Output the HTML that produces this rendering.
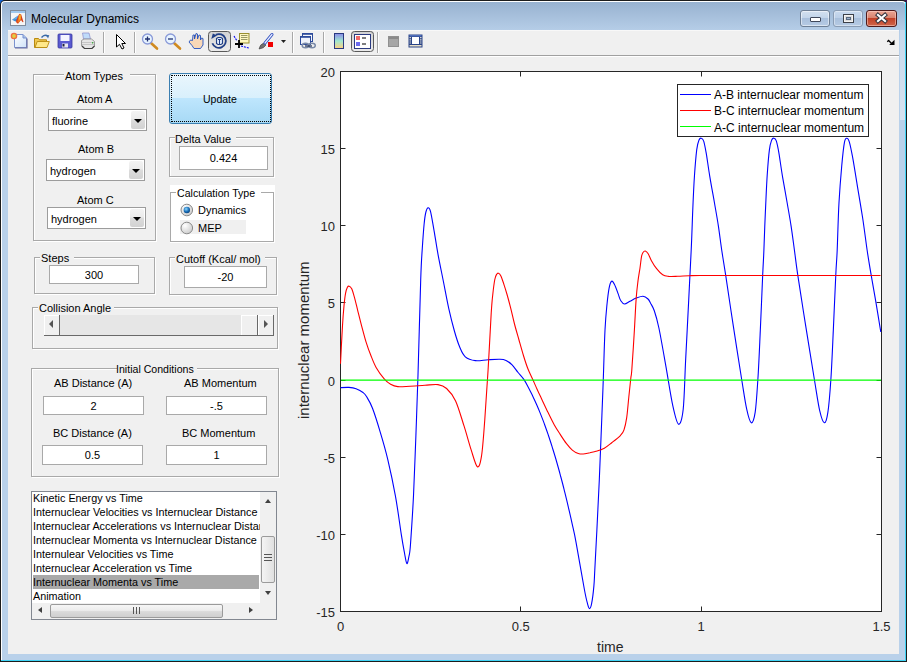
<!DOCTYPE html>
<html><head><meta charset="utf-8"><style>
html,body{margin:0;padding:0;}
body{width:907px;height:662px;overflow:hidden;position:relative;background:#1c1c1c;font-family:"Liberation Sans",sans-serif;color:#000;}
div{box-sizing:border-box;}
.a{position:absolute;}
.t{position:absolute;white-space:nowrap;font-size:11px;line-height:13px;}
.pan{position:absolute;border:1px solid #a7a7a7;box-shadow:inset 1px 1px 0 #fff,1px 1px 0 #fff;}
.ptl{position:absolute;background:#f0f0f0;white-space:nowrap;font-size:11px;line-height:13px;padding:0 3px 0 2px;}
.edit{position:absolute;background:#fff;border:1px solid #a9a9a9;font-size:11px;text-align:center;white-space:nowrap;}
.pop{position:absolute;background:#fff;border:1px solid #9c9c9c;font-size:11px;white-space:nowrap;}
.pop .btn{position:absolute;right:1px;top:1px;bottom:1px;width:14px;border-radius:2px;background:linear-gradient(#f3f3f3 0%,#ebebeb 45%,#dcdcdc 50%,#d2d2d2 100%);}
.pop .btn:after{content:"";position:absolute;left:3px;top:8px;border-left:4px solid transparent;border-right:4px solid transparent;border-top:4.5px solid #000;}
.sep{position:absolute;top:32px;width:1px;height:21px;background:#a0a0a0;box-shadow:1px 0 0 #fff;}
</style></head><body>
<!-- frame -->
<div class="a" style="left:0;top:0;width:6px;height:6px;background:#1464d2;"></div>
<div class="a" style="left:901px;top:0;width:6px;height:6px;background:#3c1650;"></div>
<div class="a" style="left:0;top:0;width:907px;height:662px;background:#1c1c1c;border-radius:5px 5px 0 0;"></div>
<div class="a" style="left:1px;top:1px;width:905px;height:660px;background:#fff;border-radius:4px 4px 0 0;"></div>
<div class="a" style="left:905px;top:2px;width:1px;height:659px;background:#3fd3f5;"></div>
<div class="a" style="left:1px;top:660px;width:905px;height:1px;background:#3fd3f5;"></div>
<div class="a" style="left:2px;top:2px;width:903px;height:658px;border-radius:3px 3px 0 0;background:linear-gradient(#98b2d0 0px,#b5cde7 28px,#b9d1ea 40px,#b9d1ea 100%);"></div>
<div class="a" style="left:900px;top:30px;width:5px;height:90px;background:linear-gradient(#c8d9ec,#d6e2ef);"></div>
<!-- title -->
<svg class="a" style="left:10px;top:10px" width="16" height="16" viewBox="0 0 16 16">
 <rect x="0.5" y="0.5" width="15" height="15" fill="#f6f6f6" stroke="#7f8c9c"/>
 <rect x="1" y="1" width="14" height="2" fill="#9fc8ee"/>
 <path d="M2,9.8 L8.5,5.2 L8,11 L5.5,11.5Z" fill="#3f8ad0"/>
 <path d="M2.5,9.8 L8.5,5.5 L6.5,9Z" fill="#6ab0e8"/>
 <path d="M6,11 L9.3,3.8 L11.2,4.5 L13.5,12 L12.7,12.3 L11,10 L8,13.8 L6.5,12.8Z" fill="#d8401a"/>
 <path d="M8.5,6 L10.5,4.2 L11,9.8 L8.3,13 L7.5,11.5Z" fill="#f0781e"/>
 <path d="M9.5,4.8 L10.6,4.5 L10.5,9 L9.2,9.8Z" fill="#f8c828"/>
</svg>
<div class="t" style="left:31px;top:12px;font-size:12px;line-height:14px;color:#000;">Molecular Dynamics</div>
<!-- window buttons -->
<div class="a" style="left:800px;top:10px;width:30px;height:17px;border:1px solid #6d7f95;border-radius:3px;background:linear-gradient(#d3e0ef 0%,#c3d5ea 45%,#a9c0dc 50%,#b6cbe4 100%);box-shadow:inset 0 0 0 1px rgba(255,255,255,.5);"></div>
<div class="a" style="left:810px;top:17px;width:11px;height:5px;background:#fff;border:1px solid #40485a;border-radius:1px;"></div>
<div class="a" style="left:833px;top:10px;width:30px;height:17px;border:1px solid #8a9cb3;border-radius:3px;background:linear-gradient(#c9daee 0%,#bcd0e8 45%,#a9c0dc 50%,#b6cbe4 100%);box-shadow:inset 0 0 0 1px rgba(255,255,255,.4);"></div>
<div class="a" style="left:843px;top:14px;width:11px;height:9px;border:1px solid #3c4048;background:#dcdcdc;box-shadow:inset 0 0 0 1px #f4f4f4;"></div>
<div class="a" style="left:846px;top:17px;width:5px;height:3px;background:#9ab0cc;border:1px solid #5a6a80;"></div>
<div class="a" style="left:866px;top:10px;width:31px;height:17px;border:1px solid #4f1a1a;border-radius:3px;background:linear-gradient(#eba593 0%,#d98470 45%,#c24127 50%,#d0664b 100%);box-shadow:inset 0 0 0 1px rgba(255,220,210,.5);"></div>
<svg class="a" style="left:872px;top:11px" width="19" height="15" viewBox="0 0 19 15"><path d="M6,4 L13,10 M13,4 L6,10" stroke="#34343e" stroke-width="4.2" fill="none" stroke-linecap="square"/><path d="M6,4 L13,10 M13,4 L6,10" stroke="#fff" stroke-width="2.2" fill="none" stroke-linecap="square"/></svg>
<!-- content -->
<div class="a" style="left:8px;top:30px;width:891px;height:624px;background:#f0f0f0;"></div>
<div class="a" style="left:8px;top:30px;width:891px;height:1px;background:#f8f8f8;"></div>
<div class="a" style="left:8px;top:55px;width:891px;height:1px;background:#a0a0a0;"></div>
<div class="a" style="left:8px;top:56px;width:891px;height:1px;background:#fff;"></div>
<svg class="a" style="left:0;top:0" width="907" height="60" viewBox="0 0 907 60">
 <defs>
  <linearGradient id="gdoc" x1="0" y1="0" x2="1" y2="1"><stop offset="0" stop-color="#ffffff"/><stop offset="1" stop-color="#cfe2f8"/></linearGradient>
  <linearGradient id="gfold" x1="0" y1="0" x2="0" y2="1"><stop offset="0" stop-color="#fff6b0"/><stop offset="1" stop-color="#f2c640"/></linearGradient>
  <linearGradient id="gcb" x1="0" y1="0" x2="0" y2="1"><stop offset="0" stop-color="#8a8ae8"/><stop offset="0.5" stop-color="#a0e8d0"/><stop offset="1" stop-color="#ffd080"/></linearGradient>
  <linearGradient id="gpress" x1="0" y1="0" x2="0" y2="1"><stop offset="0" stop-color="#d2d2d2"/><stop offset="1" stop-color="#ececec"/></linearGradient>
 </defs>
 <!-- new -->
 <path d="M14.5,34.5 H23 L26.5,38 V47.5 H14.5 Z" fill="url(#gdoc)" stroke="#7b93cf" stroke-width="1"/>
 <path d="M15,48 H27 V38.5" fill="none" stroke="#6a6ea0" stroke-width="1.2"/>
 <path d="M23,34.5 V38 H26.5" fill="#a8c0e8" stroke="#7b93cf"/>
 <circle cx="14" cy="36" r="2.6" fill="#e0d040" stroke="#f07040" stroke-width="1.4"/>
 <!-- open -->
 <path d="M34.5,38.5 H38.5 L39.5,39.8 H46.5 V47.5 H34.5Z" fill="#f0c850" stroke="#b88a10"/>
 <path d="M35,47.5 L37.2,41.5 H49.3 L47,47.5Z" fill="#ffe88a" stroke="#b88a10" stroke-width="0.9"/>
 <path d="M41.5,37.5 Q44.5,33.8 47.5,36.2" fill="none" stroke="#3a6aa8" stroke-width="1.3"/>
 <path d="M46,34.8 L49.3,35.3 L48,38.5Z" fill="#3a6aa8"/>
 <!-- save -->
 <rect x="58" y="34" width="14" height="14" rx="1" fill="#5a5ad0" stroke="#3838a0" stroke-width="0.8"/>
 <rect x="60.5" y="35" width="9" height="6" fill="#f4f4ff"/>
 <rect x="62" y="43.5" width="6" height="4" fill="#e8e8f0"/>
 <rect x="62.5" y="44" width="2" height="2.5" fill="#202040"/>
 <!-- print -->
 <path d="M82.5,33 H89 L90.5,39 H83.5Z" fill="#c0dcfa" stroke="#8a8ac8" stroke-width="0.7"/>
 <path d="M81.5,40.5 L84,39 H91.5 L94.5,41.5 V46 L92,48.5 H84.5 L81.5,46Z" fill="#e6e6e6" stroke="#8a8a8a" stroke-width="0.8"/>
 <path d="M82,42.5 H94 M82,44.5 H94" stroke="#b8b8b8" stroke-width="0.7"/>
 <path d="M82,46 L84.5,48.5 H92 L94.5,46" fill="none" stroke="#404040" stroke-width="1.2"/>
 <rect x="92" y="42" width="1.2" height="1.5" fill="#40b040"/>
 <!-- separators -->
 <rect x="103" y="32" width="1" height="21" fill="#a8a8a8"/><rect x="104" y="32" width="1" height="21" fill="#fff"/>
 <!-- arrow -->
 <path d="M116.5,34.5 V47 L119.5,44.3 L122,49 L124,48 L121.8,43.5 H125.5 Z" fill="#fff" stroke="#000" stroke-width="1"/>
 <rect x="134" y="32" width="1" height="21" fill="#a8a8a8"/><rect x="135" y="32" width="1" height="21" fill="#fff"/>
 <!-- zoom in -->
 <path d="M151,43 L157,48.5" stroke="#d08a20" stroke-width="2.6" stroke-linecap="round"/>
 <circle cx="147.5" cy="39" r="5" fill="#e8f4ff" stroke="#8a9ad8" stroke-width="1.3"/>
 <path d="M145,39 H150 M147.5,36.5 V41.5" stroke="#203070" stroke-width="1.3"/>
 <!-- zoom out -->
 <path d="M174,43 L180,48.5" stroke="#d08a20" stroke-width="2.6" stroke-linecap="round"/>
 <circle cx="170.5" cy="39" r="5" fill="#e8f4ff" stroke="#8a9ad8" stroke-width="1.3"/>
 <path d="M168,39 H173" stroke="#203070" stroke-width="1.3"/>
 <!-- hand -->
 <path d="M189,42 L192,45.5 L194,48.5 H200.5 L203,45 V38.5 L201.5,38 L200.5,40 V35.5 L199,35 L197.5,39 V34 L196,33.5 L194.5,39 V35 L193,35 L192.5,40.5 L190.5,40 Z" fill="#f8d8b8" stroke="#2050c0" stroke-width="0.9"/>
 <!-- rotate pressed -->
 <rect x="208.5" y="31.5" width="22" height="20" rx="3" fill="url(#gpress)" stroke="#5a5a5a"/>
 <path d="M212.4,43.3 A6.9,6.9 0 1 0 215.8,34.8" fill="none" stroke="#213f86" stroke-width="1.8"/>
 <path d="M211.3,39 L212.8,33.5 L217,35.5Z" fill="#213f86"/>
 <path d="M216.5,38.5 L218,37.5 H221 L222.5,38.5 V43.5 L221,44.5 H218 L216.5,43.5Z" fill="#dce8fa" stroke="#213f86" stroke-width="1.1"/>
 <path d="M218,39.5 H221 M219.5,39.5 V44" stroke="#213f86" stroke-width="1"/>
 <!-- data cursor -->
 <rect x="239.5" y="33.5" width="9.5" height="9.5" fill="#fff8c0" stroke="#9a9030"/>
 <path d="M241,35.5 H247.5 M241,37.5 H247.5 M241,39.5 H247.5" stroke="#8c8c5a" stroke-width="0.9"/>
 <path d="M234,36 L237,41 M241,46 L249,48" stroke="#0000f0" stroke-width="1.1" stroke-dasharray="2 1"/>
 <path d="M235,44 H243 M239,40 V48" stroke="#000" stroke-width="1.8"/>
 <!-- brush -->
 <path d="M259,49 Q260,44 264,43 L266,45 Q264,48.5 259,49Z" fill="#707070" stroke="#404040" stroke-width="0.6"/>
 <path d="M265,43 L272,34.5" stroke="#3050c0" stroke-width="3" stroke-linecap="round"/>
 <path d="M265,43 L272,34.5" stroke="#e8ecff" stroke-width="1.2" stroke-linecap="round"/>
 <rect x="268" y="42" width="5" height="5" fill="#f00000"/>
 <path d="M281,40 H286 L283.5,43Z" fill="#202020"/>
 <rect x="292" y="32" width="1" height="21" fill="#a8a8a8"/><rect x="293" y="32" width="1" height="21" fill="#fff"/>
 <!-- link -->
 <rect x="302.5" y="33.5" width="10" height="8" fill="#f4f6fc" stroke="#2c4a9a"/>
 <rect x="302.5" y="33" width="10" height="1.8" fill="#2c4a9a"/>
 <rect x="300.5" y="36.5" width="10" height="8" fill="#eef2fb" stroke="#2c4a9a"/>
 <rect x="300.5" y="36" width="10" height="1.8" fill="#2c4a9a"/>
 <ellipse cx="305.5" cy="45.5" rx="3.3" ry="2.3" fill="none" stroke="#7a8aa8" stroke-width="1.5"/>
 <ellipse cx="312" cy="45.5" rx="3.3" ry="2.3" fill="none" stroke="#7a8aa8" stroke-width="1.5"/>
 <path d="M305,46 H312" stroke="#1a2a50" stroke-width="1.2"/>
 <rect x="323" y="32" width="1" height="21" fill="#a8a8a8"/><rect x="324" y="32" width="1" height="21" fill="#fff"/>
 <!-- colorbar -->
 <rect x="334.5" y="33.5" width="9" height="15" fill="url(#gcb)" stroke="#2a3a80"/>
 <!-- legend pressed -->
 <rect x="351.5" y="31.5" width="22" height="20" rx="3" fill="url(#gpress)" stroke="#5a5a5a"/>
 <rect x="354.5" y="34.5" width="16" height="14" fill="#fff" stroke="#2a3a80"/>
 <rect x="356" y="36" width="4" height="4" fill="#f06a6a"/><rect x="356" y="42" width="4" height="4" fill="#6a6af0"/>
 <path d="M362,38 H366 M362,44 H366" stroke="#000" stroke-width="1.2"/>
 <rect x="377" y="32" width="1" height="21" fill="#a8a8a8"/><rect x="378" y="32" width="1" height="21" fill="#fff"/>
 <!-- grey square -->
 <rect x="388.5" y="36.5" width="10" height="10" fill="#a6a6a6" stroke="#909090"/>
 <rect x="389" y="37" width="9.5" height="2" fill="#8a8a8a"/>
 <!-- film -->
 <rect x="408.5" y="34.5" width="14" height="13" fill="#2a4488"/>
 <rect x="409.5" y="35.2" width="12" height="1.2" fill="#5a7ac8"/>
 <rect x="412" y="37" width="7" height="7" fill="#fff"/>
 <path d="M410.2,37 V44 M420.8,37 V44" stroke="#f4f0e0" stroke-width="1.3" stroke-dasharray="1 0.8"/>
 <rect x="409.5" y="45" width="12" height="1.5" fill="#e8e0c8"/>
 <!-- right arrow -->
 <path d="M887.3,41.8 L888.6,40.5 L891.8,43.7" stroke="#000" stroke-width="1.3" fill="none"/>
 <path d="M894.5,39.8 V45 H889.2Z" fill="#000"/>
</svg>

<div class="a" style="left:34px;top:75px;width:123px;height:167px;border:1px solid #fff"></div><div class="a" style="left:33px;top:74px;width:123px;height:167px;border:1px solid #a9a9a9"></div><div class="a" style="left:64px;top:73px;width:66px;height:4px;background:#f0f0f0"></div><div class="t" style="left:65px;top:70px;font-size:11px">Atom Types</div><div class="t" style="left:77px;top:93px;font-size:11px;">Atom A</div><div class="pop" style="left:48px;top:109px;width:99px;height:22px;line-height:23px;padding-left:3px">fluorine<div class="btn"></div></div><div class="t" style="left:78px;top:143px;font-size:11px;">Atom B</div><div class="pop" style="left:46px;top:159px;width:99px;height:22px;line-height:23px;padding-left:3px">hydrogen<div class="btn"></div></div><div class="t" style="left:77px;top:194px;font-size:11px;">Atom C</div><div class="pop" style="left:47px;top:207px;width:99px;height:22px;line-height:23px;padding-left:3px">hydrogen<div class="btn"></div></div><div class="a" style="left:169px;top:73px;width:103px;height:51px;border:1px solid #3c7fb1;border-radius:3px;background:linear-gradient(#eaf6fd 0%,#d9f0fc 48%,#bee6fd 50%,#a7d9f5 100%);"></div><div class="a" style="left:171px;top:75px;width:100px;height:47px;border:1px dotted #000;"></div><div class="t" style="left:203px;top:93px;font-size:11px;font-size:10.5px">Update</div><div class="a" style="left:170px;top:138px;width:105px;height:40px;border:1px solid #fff"></div><div class="a" style="left:169px;top:137px;width:105px;height:40px;border:1px solid #a9a9a9"></div><div class="a" style="left:175px;top:136px;width:61px;height:4px;background:#f0f0f0"></div><div class="t" style="left:175px;top:133px;font-size:11px">Delta Value</div><div class="edit" style="left:179px;top:146px;width:89px;height:24px;line-height:23px">0.424</div><div class="a" style="left:170px;top:185px;width:105px;height:58px;background:#fff"></div><div class="a" style="left:171px;top:193px;width:104px;height:50px;border:1px solid #fff"></div><div class="a" style="left:170px;top:192px;width:104px;height:50px;border:1px solid #a9a9a9"></div><div class="a" style="left:176px;top:191px;width:85px;height:4px;background:#fff"></div><div class="t" style="left:177px;top:187px;font-size:10.6px">Calculation Type</div><div class="a" style="left:180px;top:220px;width:66px;height:14px;background:#f0f0f0"></div><svg class="a" style="left:180px;top:203px" width="14" height="32" viewBox="0 0 14 32"><defs><radialGradient id="rg" cx="0.35" cy="0.3" r="0.8"><stop offset="0" stop-color="#fff"/><stop offset="1" stop-color="#c8c8c8"/></radialGradient><radialGradient id="rb" cx="0.4" cy="0.35" r="0.7"><stop offset="0" stop-color="#8fd8ff"/><stop offset="0.6" stop-color="#1a6fb8"/><stop offset="1" stop-color="#0a3f78"/></radialGradient></defs><circle cx="6.8" cy="7" r="5.8" fill="url(#rg)" stroke="#8a8a8a"/><circle cx="6.8" cy="7" r="3.2" fill="url(#rb)"/><circle cx="6.8" cy="25" r="5.8" fill="url(#rg)" stroke="#8a8a8a"/></svg><div class="t" style="left:198px;top:204px;font-size:11px;">Dynamics</div><div class="t" style="left:198px;top:222px;font-size:11px;">MEP</div><div class="a" style="left:35px;top:258px;width:121px;height:37px;border:1px solid #fff"></div><div class="a" style="left:34px;top:257px;width:121px;height:37px;border:1px solid #a9a9a9"></div><div class="a" style="left:40px;top:256px;width:34px;height:4px;background:#f0f0f0"></div><div class="t" style="left:41px;top:252px;font-size:11px">Steps</div><div class="edit" style="left:49px;top:265px;width:90px;height:19px;line-height:18px">300</div><div class="a" style="left:170px;top:258px;width:108px;height:38px;border:1px solid #fff"></div><div class="a" style="left:169px;top:257px;width:108px;height:38px;border:1px solid #a9a9a9"></div><div class="a" style="left:175px;top:256px;width:90px;height:4px;background:#f0f0f0"></div><div class="t" style="left:176px;top:253px;font-size:11px">Cutoff (Kcal/ mol)</div><div class="edit" style="left:184px;top:266px;width:83px;height:22px;line-height:21px">-20</div><div class="a" style="left:33px;top:308px;width:246px;height:42px;border:1px solid #fff"></div><div class="a" style="left:32px;top:307px;width:246px;height:42px;border:1px solid #a9a9a9"></div><div class="a" style="left:38px;top:306px;width:76px;height:4px;background:#f0f0f0"></div><div class="t" style="left:39px;top:302px;font-size:11px">Collision Angle</div><div class="a" style="left:44px;top:315px;width:230px;height:21px;background:#e6e6e6;border-bottom:1px solid #696969"></div><div class="a" style="left:44px;top:315px;width:16px;height:21px;background:#f0f0f0;border-right:1px solid #696969;border-bottom:1px solid #696969;box-shadow:inset 1px 1px 0 #fff"></div><div class="a" style="left:49px;top:320px;border-top:4px solid transparent;border-bottom:4px solid transparent;border-right:4px solid #555"></div><div class="a" style="left:241px;top:315px;width:17px;height:21px;background:#f0f0f0;border-right:1px solid #696969;border-bottom:1px solid #696969;box-shadow:inset 1px 1px 0 #fff"></div><div class="a" style="left:258px;top:315px;width:16px;height:21px;background:#f0f0f0;border-right:1px solid #696969;border-bottom:1px solid #696969;box-shadow:inset 1px 1px 0 #fff"></div><div class="a" style="left:264px;top:320px;border-top:4px solid transparent;border-bottom:4px solid transparent;border-left:4px solid #555"></div><div class="a" style="left:32px;top:369px;width:248px;height:109px;border:1px solid #fff"></div><div class="a" style="left:31px;top:368px;width:248px;height:109px;border:1px solid #a9a9a9"></div><div class="a" style="left:117px;top:367px;width:80px;height:4px;background:#f0f0f0"></div><div class="t" style="left:116px;top:363px;font-size:10.6px">Initial Conditions</div><div class="t" style="left:54px;top:377px;font-size:11px;">AB Distance (A)</div><div class="edit" style="left:43px;top:396px;width:101px;height:19px;line-height:18px">2</div><div class="t" style="left:184px;top:377px;font-size:11px;">AB Momentum</div><div class="edit" style="left:166px;top:396px;width:101px;height:19px;line-height:18px">-.5</div><div class="t" style="left:53px;top:427px;font-size:11px;">BC Distance (A)</div><div class="edit" style="left:42px;top:445px;width:101px;height:20px;line-height:19px">0.5</div><div class="t" style="left:182px;top:427px;font-size:11px;">BC Momentum</div><div class="edit" style="left:166px;top:445px;width:101px;height:20px;line-height:19px">1</div><div class="a" style="left:31px;top:491px;width:246px;height:129px;border:1px solid #828790;background:#fff;overflow:hidden"><div class="a" style="left:1px;top:83px;width:226px;height:14px;background:#a9a9a9"></div><div class="a" style="left:0;top:0;width:228px;height:111px;overflow:hidden"><div class="t" style="left:1px;top:-1px;font-size:10.8px;line-height:14px">Kinetic Energy vs Time</div><div class="t" style="left:1px;top:13px;font-size:10.8px;line-height:14px">Internuclear Velocities vs Internuclear Distance</div><div class="t" style="left:1px;top:27px;font-size:10.8px;line-height:14px">Internuclear Accelerations vs Internuclear Distance</div><div class="t" style="left:1px;top:41px;font-size:10.8px;line-height:14px">Internuclear Momenta vs Internuclear Distance</div><div class="t" style="left:1px;top:55px;font-size:10.8px;line-height:14px">Internulear Velocities vs Time</div><div class="t" style="left:1px;top:69px;font-size:10.8px;line-height:14px">Internuclear Acceleration vs Time</div><div class="t" style="left:1px;top:83px;font-size:10.8px;line-height:14px">Internuclear Momenta vs Time</div><div class="t" style="left:1px;top:97px;font-size:10.8px;line-height:14px">Animation</div></div><div class="a" style="left:228px;top:0;width:16px;height:111px;background:#f0f0f0"></div><div class="a" style="left:233px;top:7px;border-left:3.5px solid transparent;border-right:3.5px solid transparent;border-bottom:4px solid #404040"></div><div class="a" style="left:233px;top:99px;border-left:3.5px solid transparent;border-right:3.5px solid transparent;border-top:4px solid #404040"></div><div class="a" style="left:229px;top:44px;width:14px;height:47px;border:1px solid #9a9a9a;border-radius:2px;background:linear-gradient(90deg,#f4f4f4,#e0e0e0)"></div><div class="a" style="left:232px;top:62px;width:8px;height:7px;border-top:1px solid #555;border-bottom:1px solid #555"></div><div class="a" style="left:232px;top:65px;width:8px;height:1px;background:#555"></div><div class="a" style="left:0;top:111px;width:244px;height:16px;background:#f0f0f0"></div><div class="a" style="left:6px;top:115px;border-top:3.5px solid transparent;border-bottom:3.5px solid transparent;border-right:4px solid #404040"></div><div class="a" style="left:217px;top:115px;border-top:3.5px solid transparent;border-bottom:3.5px solid transparent;border-left:4px solid #404040"></div><div class="a" style="left:18px;top:112px;width:173px;height:14px;border:1px solid #9a9a9a;border-radius:2px;background:linear-gradient(#f6f6f6 0%,#ececec 45%,#dadada 55%,#cfcfcf 100%)"></div><div class="a" style="left:101px;top:115px;width:7px;height:7px;border-left:1px solid #555;border-right:1px solid #555"></div><div class="a" style="left:104px;top:115px;width:1px;height:7px;background:#555"></div></div>
<svg class="a" style="left:0;top:0" width="907" height="662" viewBox="0 0 907 662"><rect x="340.5" y="71.5" width="541.0" height="540.0" fill="#fff"/><path d="M340.5,611.5 h5 M881.5,611.5 h-5 M340.5,534.5 h5 M881.5,534.5 h-5 M340.5,457.5 h5 M881.5,457.5 h-5 M340.5,380.5 h5 M881.5,380.5 h-5 M340.5,302.5 h5 M881.5,302.5 h-5 M340.5,225.5 h5 M881.5,225.5 h-5 M340.5,148.5 h5 M881.5,148.5 h-5 M340.5,71.5 h5 M881.5,71.5 h-5 M340.5,71.5 v5 M340.5,611.5 v-5 M520.5,71.5 v5 M520.5,611.5 v-5 M701.5,71.5 v5 M701.5,611.5 v-5 M881.5,71.5 v5 M881.5,611.5 v-5 " stroke="#262626" stroke-width="1" fill="none"/><rect x="340.5" y="71.5" width="541.0" height="540.0" fill="none" stroke="#262626" stroke-width="1"/><defs><clipPath id="pc"><rect x="340" y="71" width="542" height="541"/></clipPath></defs><g clip-path="url(#pc)" fill="none" stroke-width="1.1" stroke-linejoin="round"><path d="M340.5,387.7 C341.9,387.6 346.3,387.2 348.9,387.4 C351.5,387.6 353.8,387.9 356.1,388.8 C358.5,389.7 361.3,391.2 363.0,392.5 C364.7,393.8 364.9,393.9 366.5,396.5 C368.1,399.1 370.2,402.2 372.5,408.2 C374.8,414.2 377.8,423.8 380.3,432.4 C382.9,441.0 385.3,449.0 387.8,459.6 C390.3,470.2 393.1,483.2 395.4,495.8 C397.7,508.4 399.9,525.6 401.4,535.1 C402.9,544.6 403.6,548.2 404.5,553.0 C405.4,557.8 406.1,563.1 406.9,563.6 C407.6,564.1 408.4,559.2 409.0,556.0 C409.6,552.8 409.8,554.2 410.5,544.2 C411.2,534.2 412.6,513.9 413.5,495.8 C414.4,477.7 415.1,455.5 415.9,435.4 C416.6,415.3 417.2,400.9 418.0,375.0 C418.8,349.1 420.0,301.1 420.7,280.0 C421.4,258.9 421.7,257.6 422.3,248.3 C422.9,239.0 423.5,230.2 424.1,224.2 C424.7,218.1 425.2,214.7 425.9,212.0 C426.6,209.3 427.3,207.9 428.1,207.8 C428.9,207.7 429.5,207.6 430.5,211.3 C431.5,215.1 432.7,223.1 434.0,230.3 C435.3,237.6 436.5,246.2 438.1,254.8 C439.7,263.4 441.7,272.9 443.5,282.0 C445.3,291.1 447.1,301.0 448.9,309.2 C450.7,317.4 452.6,324.6 454.4,331.0 C456.2,337.4 458.0,343.0 459.8,347.3 C461.6,351.6 462.7,354.6 465.3,356.8 C467.9,359.0 471.5,360.1 475.3,360.6 C479.1,361.1 484.0,359.9 488.1,359.7 C492.2,359.5 497.0,359.2 500.0,359.3 C503.0,359.4 504.0,359.5 506.0,360.4 C508.0,361.3 510.1,362.9 512.1,364.9 C514.1,366.9 516.1,370.1 518.1,372.5 C520.1,374.9 522.4,377.2 524.0,379.6 C525.6,382.0 526.7,384.2 528.0,386.7 C529.3,389.2 530.7,391.9 532.0,394.6 C533.3,397.4 534.7,400.2 536.0,403.2 C537.3,406.2 538.7,409.3 540.0,412.6 C541.3,415.9 542.7,419.3 544.0,422.9 C545.3,426.5 546.7,430.3 548.0,434.2 C549.3,438.1 550.7,442.2 552.0,446.4 C553.3,450.6 554.7,454.9 556.0,459.5 C557.3,464.1 558.7,468.9 560.0,473.8 C561.3,478.7 562.7,483.8 564.0,489.1 C565.3,494.4 566.7,499.9 568.0,505.6 C569.3,511.3 570.7,517.1 572.0,523.2 C573.3,529.3 574.0,531.1 576.0,542.1 C578.0,553.1 582.4,578.8 584.3,589.0 C586.2,599.2 586.6,600.3 587.5,603.6 C588.4,606.9 588.7,608.6 589.4,608.6 C590.1,608.6 590.9,607.4 591.6,603.6 C592.4,599.8 593.4,591.5 593.9,585.9 C594.4,580.3 594.3,579.4 594.8,570.0 C595.3,560.6 596.1,544.8 596.9,529.8 C597.6,514.8 598.5,499.1 599.3,480.0 C600.1,460.9 601.2,432.8 601.9,415.5 C602.6,398.2 602.9,390.2 603.4,376.0 C603.9,361.8 604.4,341.6 605.0,330.0 C605.6,318.4 606.1,313.2 606.8,306.2 C607.5,299.2 608.3,292.2 609.1,288.1 C609.9,284.0 610.7,281.9 611.6,281.3 C612.5,280.7 613.4,282.4 614.5,284.5 C615.6,286.6 617.1,290.9 618.1,293.6 C619.1,296.3 619.7,299.1 620.8,300.8 C621.9,302.5 623.0,303.9 624.5,304.0 C626.0,304.1 627.9,302.3 629.9,301.3 C631.9,300.3 634.0,298.9 636.2,298.1 C638.4,297.3 641.0,296.2 643.0,296.3 C645.0,296.4 646.7,297.8 648.0,299.0 C649.3,300.2 649.7,301.5 650.7,303.5 C651.8,305.5 652.9,306.7 654.3,310.8 C655.7,314.9 656.9,318.6 658.9,328.0 C660.9,337.4 663.7,353.9 666.0,366.9 C668.3,379.9 670.8,396.6 672.9,406.2 C675.0,415.8 676.9,423.8 678.6,424.3 C680.3,424.8 682.0,419.8 683.2,409.2 C684.4,398.6 684.7,378.9 685.6,360.8 C686.5,342.7 687.8,318.9 688.7,300.4 C689.6,281.9 690.5,264.8 691.2,250.0 C691.9,235.2 692.2,224.0 692.7,211.6 C693.2,199.2 693.8,185.6 694.5,175.3 C695.2,165.0 696.0,155.8 696.7,149.9 C697.5,144.0 698.2,141.9 699.0,140.0 C699.8,138.1 700.4,138.0 701.2,138.2 C702.0,138.3 702.8,138.3 703.6,140.9 C704.5,143.5 705.2,147.6 706.3,153.6 C707.3,159.6 708.5,168.9 709.9,177.1 C711.2,185.2 713.0,194.3 714.4,202.5 C715.8,210.7 717.2,218.2 718.4,226.1 C719.6,234.0 720.5,241.9 721.7,250.0 C722.9,258.1 723.7,262.3 725.6,274.7 C727.5,287.1 730.4,307.2 733.1,324.6 C735.8,342.0 739.3,364.9 741.6,379.0 C743.9,393.1 745.1,401.9 746.7,409.2 C748.3,416.5 749.9,422.3 751.3,422.8 C752.7,423.3 754.1,419.5 755.2,412.2 C756.3,404.9 757.0,392.6 757.9,379.0 C758.8,365.4 759.5,348.0 760.3,330.6 C761.1,313.2 762.1,288.1 762.7,274.7 C763.3,261.3 763.5,260.5 763.9,250.0 C764.3,239.5 764.8,224.0 765.4,211.6 C766.0,199.2 766.5,185.6 767.2,175.3 C767.9,165.0 768.6,155.8 769.4,149.9 C770.1,144.0 771.0,141.9 771.7,140.0 C772.5,138.1 773.1,138.0 773.9,138.2 C774.7,138.3 775.4,138.3 776.3,140.9 C777.1,143.5 778.0,147.6 779.0,153.6 C780.0,159.6 781.2,168.9 782.6,177.1 C784.0,185.2 785.7,194.3 787.1,202.5 C788.5,210.7 789.9,218.2 791.1,226.1 C792.3,234.0 793.3,241.9 794.4,250.0 C795.5,258.1 795.9,262.3 797.7,274.7 C799.6,287.1 802.7,307.2 805.5,324.6 C808.3,342.0 811.9,364.6 814.3,379.0 C816.7,393.4 818.0,403.4 819.7,410.7 C821.4,418.0 822.9,422.6 824.3,422.8 C825.7,423.1 826.8,419.5 827.9,412.2 C829.0,404.9 830.0,392.6 830.9,379.0 C831.8,365.4 832.5,348.0 833.3,330.6 C834.1,313.2 835.1,288.1 835.8,274.7 C836.4,261.3 836.7,262.0 837.2,250.0 C837.7,238.0 838.2,216.4 839.0,202.5 C839.8,188.6 840.8,176.3 841.7,166.3 C842.6,156.3 843.5,147.4 844.4,142.7 C845.2,138.0 846.0,138.3 846.8,138.2 C847.6,138.0 848.3,138.6 849.3,141.8 C850.3,145.0 851.3,150.1 852.6,157.2 C853.9,164.3 855.5,174.4 857.1,184.4 C858.8,194.4 860.8,206.1 862.5,217.0 C864.2,227.9 865.7,240.4 867.1,250.0 C868.5,259.6 869.7,266.3 871.1,274.7 C872.5,283.1 874.0,290.8 875.6,300.4 C877.2,309.9 879.9,326.7 880.8,332.0" stroke="#0000ff"/><path d="M340.5,363.8 C340.6,361.1 341.0,353.8 341.3,347.5 C341.6,341.2 342.1,332.8 342.5,325.8 C342.9,318.9 343.5,311.2 344.0,305.8 C344.5,300.4 345.0,296.2 345.6,293.1 C346.2,290.0 346.8,288.5 347.4,287.3 C348.0,286.1 348.5,286.0 349.2,286.2 C349.9,286.4 350.8,286.8 351.6,288.6 C352.5,290.4 353.2,293.0 354.3,296.8 C355.4,300.6 356.7,306.5 357.9,311.3 C359.1,316.1 360.2,320.7 361.6,325.8 C363.0,330.9 364.6,337.3 366.1,342.1 C367.6,346.9 368.9,350.6 370.6,354.8 C372.3,359.0 373.8,363.4 376.1,367.4 C378.4,371.4 381.8,376.0 384.2,378.8 C386.6,381.6 388.3,382.9 390.6,384.2 C392.9,385.5 394.6,386.3 397.8,386.6 C401.0,386.9 405.5,386.4 410.0,386.2 C414.5,386.0 420.3,385.6 425.0,385.3 C429.7,385.0 434.4,384.1 438.0,384.6 C441.6,385.1 443.7,385.8 446.6,388.5 C449.5,391.2 452.7,394.6 455.6,400.9 C458.5,407.2 461.5,418.1 464.1,426.2 C466.7,434.3 468.8,442.6 471.0,449.4 C473.2,456.1 475.6,465.6 477.3,466.7 C479.1,467.8 480.2,464.0 481.5,456.1 C482.8,448.2 483.7,433.9 484.8,419.5 C485.9,405.1 487.0,387.4 488.1,369.7 C489.2,352.0 490.4,325.7 491.2,313.3 C492.0,300.9 492.1,300.8 492.7,295.2 C493.3,289.6 494.1,283.0 494.8,279.5 C495.5,276.0 496.0,275.4 496.6,274.4 C497.2,273.3 497.8,272.9 498.5,273.2 C499.2,273.4 500.0,274.0 500.9,275.9 C501.8,277.8 502.9,281.3 503.9,284.3 C504.9,287.3 505.8,290.2 506.9,294.0 C508.0,297.8 509.2,302.3 510.5,307.3 C511.8,312.3 513.1,318.6 514.5,324.0 C515.9,329.4 517.5,334.7 519.0,340.0 C520.5,345.3 522.1,351.1 523.6,356.0 C525.1,360.9 526.5,365.3 528.1,369.3 C529.7,373.3 531.5,376.6 533.0,380.0 C534.5,383.4 535.8,386.4 537.3,389.7 C538.8,393.0 540.3,396.1 542.1,399.9 C543.9,403.7 546.1,408.5 548.1,412.6 C550.1,416.7 552.2,421.1 554.2,424.7 C556.2,428.3 558.2,431.3 560.2,434.4 C562.2,437.5 564.3,440.8 566.3,443.4 C568.3,446.0 570.3,448.4 572.3,450.1 C574.3,451.8 576.5,452.9 578.3,453.5 C580.1,454.1 581.3,454.1 583.2,454.0 C585.1,453.9 587.8,453.1 589.9,452.7 C592.0,452.2 593.6,452.1 596.0,451.3 C598.4,450.6 601.6,449.7 604.3,448.2 C607.0,446.7 609.3,444.6 612.0,442.5 C614.7,440.4 618.6,437.4 620.6,435.3 C622.6,433.2 623.0,432.8 624.0,429.8 C625.0,426.9 625.9,423.0 626.7,417.6 C627.5,412.2 628.1,403.8 628.8,397.2 C629.5,390.6 630.3,382.7 630.8,378.2 C631.3,373.7 631.2,378.0 631.8,370.0 C632.4,362.0 633.7,342.0 634.4,330.0 C635.1,318.0 635.6,306.3 636.2,298.1 C636.8,289.9 637.4,285.9 638.0,280.9 C638.6,275.9 639.4,272.1 640.0,268.0 C640.6,263.9 641.0,259.2 641.5,256.6 C642.0,254.0 642.4,253.4 643.0,252.5 C643.6,251.6 644.5,250.8 645.3,251.0 C646.1,251.2 647.0,251.9 648.0,253.5 C649.0,255.1 649.9,257.9 651.3,260.4 C652.7,262.9 654.7,266.3 656.6,268.7 C658.5,271.1 660.7,273.5 662.7,274.8 C664.7,276.1 666.2,276.1 668.7,276.4 C671.2,276.6 674.4,276.4 677.8,276.3 C681.2,276.2 685.4,275.8 689.1,275.7 C692.8,275.6 688.2,275.5 700.0,275.5 C711.8,275.5 729.9,275.5 760.0,275.5 C790.1,275.5 860.4,275.5 880.5,275.5" stroke="#ff0000"/><path d="M341,380.1 H881" stroke="#00ff00"/></g></svg><div class="t" style="left:275.0px;top:604.7px;width:60px;text-align:right;font-size:13px;line-height:16px;color:#262626">-15</div><div class="t" style="left:275.0px;top:527.7px;width:60px;text-align:right;font-size:13px;line-height:16px;color:#262626">-10</div><div class="t" style="left:275.0px;top:450.7px;width:60px;text-align:right;font-size:13px;line-height:16px;color:#262626">-5</div><div class="t" style="left:275.0px;top:373.7px;width:60px;text-align:right;font-size:13px;line-height:16px;color:#262626">0</div><div class="t" style="left:275.0px;top:295.7px;width:60px;text-align:right;font-size:13px;line-height:16px;color:#262626">5</div><div class="t" style="left:275.0px;top:218.7px;width:60px;text-align:right;font-size:13px;line-height:16px;color:#262626">10</div><div class="t" style="left:275.0px;top:141.7px;width:60px;text-align:right;font-size:13px;line-height:16px;color:#262626">15</div><div class="t" style="left:275.0px;top:64.7px;width:60px;text-align:right;font-size:13px;line-height:16px;color:#262626">20</div><div class="t" style="left:310.5px;top:619px;width:60px;text-align:center;font-size:13px;line-height:16px;color:#262626">0</div><div class="t" style="left:490.8px;top:619px;width:60px;text-align:center;font-size:13px;line-height:16px;color:#262626">0.5</div><div class="t" style="left:671.2px;top:619px;width:60px;text-align:center;font-size:13px;line-height:16px;color:#262626">1</div><div class="t" style="left:851.5px;top:619px;width:60px;text-align:center;font-size:13px;line-height:16px;color:#262626">1.5</div><div class="t" style="left:597px;top:639px;font-size:14px;line-height:16px;color:#262626">time</div><div class="t" style="left:226px;top:333px;width:156px;text-align:center;font-size:15px;line-height:16px;color:#262626;transform:rotate(-90deg)">internuclear momentum</div><div class="a" style="left:677px;top:84px;width:192px;height:53px;background:#fff;border:1px solid #262626"></div><svg class="a" style="left:0;top:0" width="907" height="662" viewBox="0 0 907 662"><path d="M680,94.5 H711" stroke="#0000ff" stroke-width="1"/><path d="M680,110.5 H711" stroke="#ff0000" stroke-width="1"/><path d="M680,126.5 H711" stroke="#00ff00" stroke-width="1"/></svg><div class="t" style="left:714px;top:88.0px;font-size:12px;line-height:14px;color:#000">A-B internuclear momentum</div><div class="t" style="left:714px;top:104.3px;font-size:12px;line-height:14px;color:#000">B-C internuclear momentum</div><div class="t" style="left:714px;top:120.6px;font-size:12px;line-height:14px;color:#000">A-C internuclear momentum</div>
</body></html>
